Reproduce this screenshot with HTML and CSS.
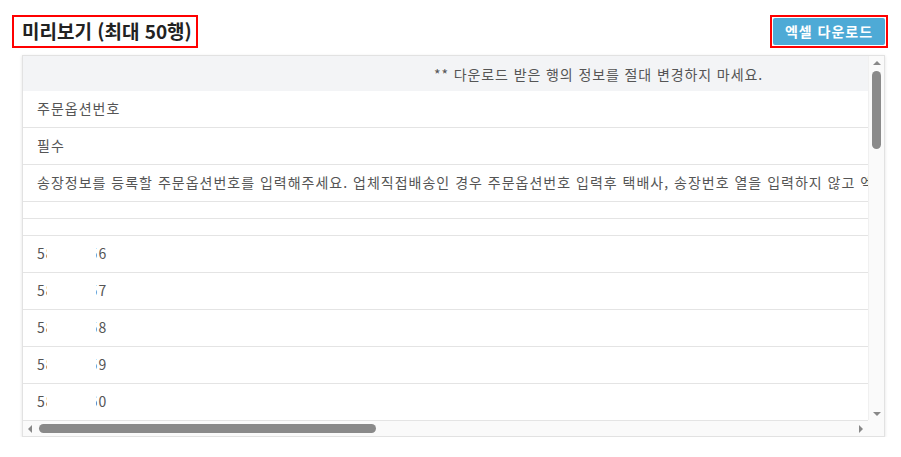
FILE: index.html
```html
<!DOCTYPE html>
<html lang="ko">
<head>
<meta charset="utf-8">
<title>미리보기</title>
<link rel="stylesheet" href="styles.css">
</head>
<body>
<div class="page">
  <div class="top">
    <h2 class="title">미리보기 (최대 50행)</h2>
    <div class="btn-frame"><button class="btn">엑셀 다운로드</button></div>
  </div>
  <div class="table">
    <div class="viewport">
      <div class="row head">** 다운로드 받은 행의 정보를 절대 변경하지 마세요.</div>
      <div class="row">주문옵션번호</div>
      <div class="row">필수</div>
      <div class="row">송장정보를 등록할 주문옵션번호를 입력해주세요. 업체직접배송인 경우 주문옵션번호 입력후 택배사, 송장번호 열을 입력하지 않고 엑셀을 업로드하세요.</div>
      <div class="row thin"></div>
      <div class="row thin"></div>
      <div class="row"><span class="num">58123456<i class="mask"></i></span></div>
      <div class="row"><span class="num">58123457<i class="mask"></i></span></div>
      <div class="row"><span class="num">58123458<i class="mask"></i></span></div>
      <div class="row"><span class="num">58123459<i class="mask"></i></span></div>
      <div class="row"><span class="num">58123460<i class="mask"></i></span></div>
    </div>
    <div class="vbar">
      <span class="arrow up"></span>
      <div class="vtrack"><div class="vthumb"></div></div>
      <span class="arrow down"></span>
    </div>
    <div class="hbar">
      <span class="arrow left"></span>
      <div class="htrack"><div class="hthumb"></div></div>
      <span class="arrow right"></span>
    </div>
    <div class="corner"></div>
  </div>
</div>
</body>
</html>
```

FILE: styles.css
```css
* { box-sizing: border-box; }
html, body { margin: 0; padding: 0; background: #fff; }
body {
  font-family: "Noto Sans CJK KR", "Noto Sans", sans-serif;
  color: #555;
}
.page { padding: 15px 13px 0 12px; width: 901px; }
.top {
  display: flex;
  justify-content: space-between;
  align-items: flex-start;
  height: 33px;
}
.title {
  margin: 0;
  height: 33px;
  border: 2px solid #f00;
  padding: 0 4px 0 8px;
  font-size: 19px;
  font-weight: 700;
  line-height: 28px;
  color: #222;
  letter-spacing: 0;
}
.btn-frame {
  border: 2px solid #f00;
  padding: 1px;
  width: 118px;
  height: 33px;
}
.btn {
  display: block;
  width: 100%;
  height: 100%;
  border: 0;
  border-radius: 2px;
  background: #4eaad6;
  color: #fff;
  font-family: inherit;
  font-size: 14px;
  font-weight: 700;
  padding: 0;
  line-height: 27px;
  letter-spacing: 1px;
}
.table {
  margin: 7px 3px 0 10px;
  height: 382px;
  border: 1px solid #e2e2e2;
  box-shadow: 0 1px 3px rgba(0,0,0,0.12);
  display: grid;
  grid-template-columns: 1fr 16px;
  grid-template-rows: 1fr 16px;
  overflow: hidden;
}
.viewport {
  overflow: hidden;
  min-width: 0;
}
.row {
  height: 37px;
  border-bottom: 1px solid #e4e4e4;
  padding-left: 14px;
  font-size: 14px;
  line-height: 35px;
  white-space: nowrap;
  color: #555;
  letter-spacing: 1px;
}
.row.head {
  height: 35px;
  border-bottom: 0;
  background: #f3f4f6;
  padding-left: 411px;
  line-height: 36px;
  color: #555;
  letter-spacing: 0.9px;
}
.row.thin { height: 17px; }
.num { position: relative; display: inline-block; letter-spacing: 1px; }
.mask {
  position: absolute;
  left: 10px;
  top: 0;
  bottom: 0;
  width: 49px;
  background: #fff;
}
.vbar {
  background: #fafafa;
  border-left: 1px solid #f0f0f0;
  display: flex;
  flex-direction: column;
  align-items: center;
  padding: 5px 0 4px;
}
.vtrack { flex: 1; width: 100%; display: flex; justify-content: center; padding-top: 6px; }
.vthumb { width: 9px; height: 78px; background: #8a8a8a; border-radius: 5px; }
.hbar {
  background: #fafafa;
  border-top: 1px solid #e4e4e4;
  display: flex;
  align-items: center;
  padding: 0 5px 0 5px;
}
.htrack { flex: 1; height: 100%; display: flex; align-items: center; padding-left: 7px; }
.hthumb { width: 337px; height: 9px; background: #8a8a8a; border-radius: 5px; }
.corner { background: #fafafa; }
.arrow { width: 0; height: 0; display: block; }
.arrow.up { border-left: 4px solid transparent; border-right: 4px solid transparent; border-bottom: 4px solid #888; }
.arrow.down { border-left: 4px solid transparent; border-right: 4px solid transparent; border-top: 4px solid #888; }
.arrow.left { border-top: 4px solid transparent; border-bottom: 4px solid transparent; border-right: 4px solid #888; }
.arrow.right { border-top: 4px solid transparent; border-bottom: 4px solid transparent; border-left: 4px solid #888; }
```
